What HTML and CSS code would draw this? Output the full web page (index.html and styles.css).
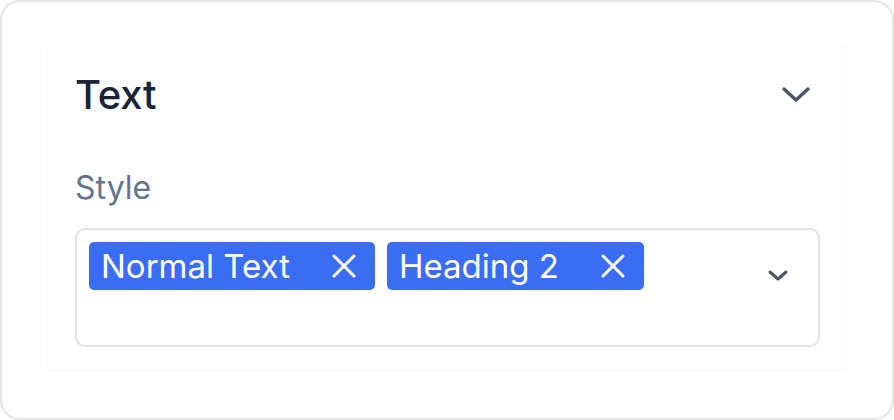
FILE: index.html
```html
<!DOCTYPE html>
<html lang="en">
<head>
<meta charset="utf-8">
<title>Text style</title>
<link rel="stylesheet" href="styles.css">
</head>
<body>
<div class="card">
  <div class="panel">
    <div class="header">
      <h2 class="title">Text</h2>
      <svg class="chev-lg" width="30" height="18" viewBox="0 0 30 18" fill="none"><path d="M3 3 L15 14 L27 3" stroke="#4b5566" stroke-width="3.4" stroke-linecap="round" stroke-linejoin="round"/></svg>
    </div>
    <div class="label">Style</div>
    <div class="select">
      <div class="tags">
        <span class="tag"><span class="tag-text">Normal Text</span><svg class="x" width="24" height="24" viewBox="0 0 24 24" fill="none"><path d="M2 2 L22 22 M22 2 L2 22" stroke="#fff" stroke-width="3" stroke-linecap="round"/></svg></span>
        <span class="tag"><span class="tag-text">Heading 2</span><svg class="x" width="24" height="24" viewBox="0 0 24 24" fill="none"><path d="M2 2 L22 22 M22 2 L2 22" stroke="#fff" stroke-width="3" stroke-linecap="round"/></svg></span>
      </div>
      <svg class="chev-sm" width="22" height="14" viewBox="0 0 22 14" fill="none"><path d="M3 3 L11 10 L19 3" stroke="#4b5566" stroke-width="3" stroke-linecap="round" stroke-linejoin="round"/></svg>
    </div>
  </div>
</div>
</body>
</html>
```
FILE: styles.css
```css
* { box-sizing: border-box; }
html, body { margin: 0; padding: 0; background: #ffffff; }
body { font-family: Inter, "Noto Sans", sans-serif; }

.card {
  width: 894px;
  height: 420px;
  border: 2px solid #e4e6ea;
  border-radius: 20px;
  padding: 43px 46px 48px 46px;
  background: #ffffff;
}

.panel {
  height: 100%;
  background: #fefeff;
  box-shadow: 0 0 0 1px #fafafc;
  padding: 27px 26px 0 27px;
  display: flex;
  flex-direction: column;
}

.header {
  display: flex;
  align-items: center;
  justify-content: space-between;
  height: 46px;
}

.title {
  margin: 0;
  font-size: 40px;
  font-weight: 500;
  line-height: 46px;
  color: #1a2438;
  letter-spacing: -0.2px;
}

.chev-lg { margin-right: 9px; }

.label {
  margin-top: 52px;
  font-size: 32px;
  line-height: 36px;
  color: #66748a;
}

.select {
  margin-top: 22px;
  height: 119px;
  border: 2px solid #e2e4e9;
  border-radius: 10px;
  background: #ffffff;
  padding: 12px 29px 12px 12px;
  display: flex;
  align-items: flex-start;
  justify-content: space-between;
}

.tags { display: flex; gap: 12px; }

.tag {
  display: flex;
  align-items: center;
  height: 48px;
  padding: 0 19px 0 12px;
  background: #3b6cf4;
  border-radius: 5px;
  color: #ffffff;
  font-size: 33px;
  line-height: 48px;
}

.tag-text { margin-right: 42px; }

.chev-sm { margin-top: 27px; }
```
